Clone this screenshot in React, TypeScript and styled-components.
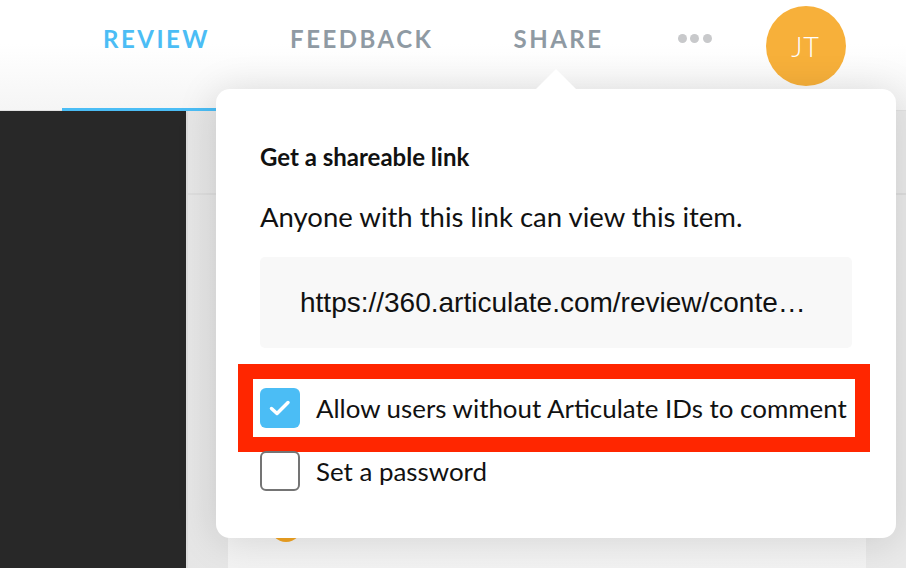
import React from "react";
import styled, { createGlobalStyle } from "styled-components";

const Global = createGlobalStyle`
  html, body { margin: 0; padding: 0; background: #ffffff; }
  body { font-family: Lato, "Noto Sans", sans-serif; }
  * { box-sizing: border-box; }
`;

const Page = styled.div`
  position: relative;
  width: 906px;
  height: 568px;
  overflow: hidden;
  display: flex;
  flex-direction: column;
  background: #ebebeb;
`;

const Header = styled.header`
  height: 111px;
  flex: none;
  display: flex;
  align-items: stretch;
  padding-left: 62px;
  background: linear-gradient(#ffffff 40%, #f5f5f5 100%);
  border-bottom: 1px solid #e2e2e2;
`;

const Tab = styled.div<{ $active?: boolean }>`
  display: flex;
  align-items: flex-start;
  justify-content: center;
  padding: 24px 39px 0 41px;
  font-family: Lato, sans-serif;
  font-weight: 700;
  font-size: 24px;
  letter-spacing: 2.5px;
  color: ${(p) => (p.$active ? "#4bbdf5" : "#8f9aa3")};
  border-bottom: 3px solid ${(p) => (p.$active ? "#4bbdf5" : "transparent")};
  margin-bottom: -1px;
`;

const Dots = styled.div`
  display: flex;
  gap: 3.5px;
  margin-left: 35px;
  padding-top: 34px;
`;

const Dot = styled.span`
  width: 9px;
  height: 9px;
  border-radius: 50%;
  background: #c8c9cb;
`;

const Avatar = styled.div`
  width: 80px;
  height: 80px;
  margin-top: 6px;
  margin-left: 54px;
  border-radius: 50%;
  background: #f7b03a;
  color: #ffffff;
  display: flex;
  align-items: center;
  justify-content: center;
  font-family: Lato, sans-serif;
  font-weight: 300;
  font-size: 27px;
  letter-spacing: 1px;
`;

const Body = styled.div`
  flex: 1;
  display: flex;
`;

const DarkPanel = styled.aside`
  width: 188px;
  flex: none;
  background: #282828;
  border-right: 2px solid #dcdcdc;
`;

const Main = styled.main`
  flex: 1;
  display: flex;
  flex-direction: column;
  background: linear-gradient(90deg, #e6e6e6, #ededed 30%, #eaeaea);
`;

const Toolbar = styled.div`
  height: 84px;
  flex: none;
  border-bottom: 2px solid #dedede;
`;

const CardArea = styled.div`
  flex: 1;
  padding: 20px 40px 0 40px;
  display: flex;
`;

const Card = styled.div`
  width: 638px;
  background: linear-gradient(#ffffff 60%, #f3f3f3);
  display: flex;
  flex-direction: column;
  justify-content: flex-end;
  padding: 0 0 26px 42px;
`;

const SmallAvatar = styled.div`
  width: 32px;
  height: 32px;
  border-radius: 50%;
  background: #f5a623;
`;

const Popup = styled.div`
  position: absolute;
  left: 216px;
  top: 89px;
  width: 680px;
  height: 449px;
  background: #ffffff;
  border-radius: 14px;
  box-shadow: 0 4px 40px rgba(0, 0, 0, 0.14);
  padding: 53px 0 0 44px;
  display: flex;
  flex-direction: column;
`;

const Arrow = styled.div`
  position: absolute;
  left: 320px;
  top: -20px;
  width: 0;
  height: 0;
  border-left: 20px solid transparent;
  border-right: 20px solid transparent;
  border-bottom: 20px solid #ffffff;
`;

const Title = styled.h3`
  margin: 0;
  font-family: Lato, sans-serif;
  font-weight: 700;
  font-size: 24px;
  line-height: 29px;
  color: #111111;
`;

const Description = styled.p`
  margin: 30px 0 0;
  font-family: Lato, sans-serif;
  font-weight: 400;
  font-size: 27.5px;
  line-height: 32px;
  color: #111111;
`;

const LinkBox = styled.div`
  margin-top: 24px;
  width: 592px;
  height: 91px;
  background: #f8f8f8;
  border-radius: 5px;
  display: flex;
  align-items: center;
  padding: 0 40px 0 40px;
`;

const LinkText = styled.div`
  font-family: "Liberation Sans", Arial, sans-serif;
  font-size: 28px;
  color: #111111;
  white-space: nowrap;
  overflow: hidden;
`;

const Options = styled.div`
  margin-top: 16px;
  margin-left: -22px;
  display: flex;
  flex-direction: column;
`;

const Highlight = styled.div`
  width: 632px;
  height: 88px;
  border: 15px solid #ff2600;
  background: #ffffff;
  display: flex;
  align-items: center;
  padding-left: 7px;
`;

const Row = styled.label`
  display: flex;
  align-items: center;
  gap: 16px;
  font-family: Lato, sans-serif;
  font-size: 25.9px;
  color: #111111;
`;

const PlainRow = styled(Row)`
  margin-top: -1px;
  padding-left: 22px;
  height: 39px;
`;

const Box = styled.span<{ $checked?: boolean }>`
  width: 40px;
  height: 40px;
  flex: none;
  border-radius: 6px;
  display: flex;
  align-items: center;
  justify-content: center;
  background: ${(p) => (p.$checked ? "#4bbdf5" : "#ffffff")};
  border: ${(p) => (p.$checked ? "none" : "2px solid #747474")};
`;

const Check = () => (
  <svg width="40" height="40" viewBox="0 0 40 40">
    <path d="M11.5 20.5 L17 25.5 L28 14.5" fill="none" stroke="#ffffff" strokeWidth="3.5" strokeLinecap="round" strokeLinejoin="round" />
  </svg>
);

export default function App() {
  return (
    <>
      <Global />
      <Page>
        <Header>
          <Tab $active>REVIEW</Tab>
          <Tab>FEEDBACK</Tab>
          <Tab>SHARE</Tab>
          <Dots>
            <Dot />
            <Dot />
            <Dot />
          </Dots>
          <Avatar>JT</Avatar>
        </Header>
        <Body>
          <DarkPanel />
          <Main>
            <Toolbar />
            <CardArea>
              <Card>
                <SmallAvatar />
              </Card>
            </CardArea>
          </Main>
        </Body>
        <Popup>
          <Arrow />
          <Title>Get a shareable link</Title>
          <Description>Anyone with this link can view this item.</Description>
          <LinkBox>
            <LinkText>https://360.articulate.com/review/conte…</LinkText>
          </LinkBox>
          <Options>
            <Highlight>
              <Row>
                <Box $checked>
                  <Check />
                </Box>
                Allow users without Articulate IDs to comment
              </Row>
            </Highlight>
            <PlainRow>
              <Box />
              Set a password
            </PlainRow>
          </Options>
        </Popup>
      </Page>
    </>
  );
}
